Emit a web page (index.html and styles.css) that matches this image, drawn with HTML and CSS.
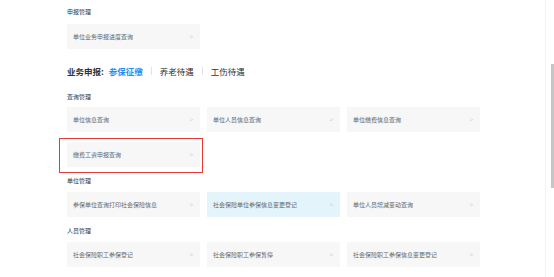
FILE: index.html
```html
<!DOCTYPE html>
<html lang="zh-CN">
  <head>
    <meta charset="UTF-8" />
    <meta name="viewport" content="width=device-width, initial-scale=1.0" />
    <title>业务申报</title>
    <link rel="stylesheet" href="styles.css">
  </head>
  <body>
    <div id="page">
      <div id="main">
        <div class="group group-first">
          <h3 class="group-title">申报管理</h3>
          <ul class="items">
            <li><a href="javascript:;">单位业务申报进度查询</a></li>
          </ul>
        </div>

        <div class="tabs">
          <span class="tabs-label">业务申报:</span>
          <a href="javascript:;" class="active">参保征缴</a>
          <i class="sep"></i>
          <a href="javascript:;">养老待遇</a>
          <i class="sep"></i>
          <a href="javascript:;">工伤待遇</a>
        </div>

        <div class="group group-query">
          <h3 class="group-title">查询管理</h3>
          <ul class="items">
            <li><a href="javascript:;">单位信息查询</a></li>
            <li><a href="javascript:;">单位人员信息查询</a></li>
            <li><a href="javascript:;">单位缴费信息查询</a></li>
            <li class="marked"><a href="javascript:;">缴费工资申报查询</a></li>
          </ul>
        </div>

        <div class="group">
          <h3 class="group-title">单位管理</h3>
          <ul class="items">
            <li><a href="javascript:;">参保单位查询打印社会保险信息</a></li>
            <li class="hover"><a href="javascript:;">社会保险单位参保信息变更登记</a></li>
            <li><a href="javascript:;">单位人员增减变动查询</a></li>
          </ul>
        </div>

        <div class="group">
          <h3 class="group-title">人员管理</h3>
          <ul class="items">
            <li><a href="javascript:;">社会保险职工参保登记</a></li>
            <li><a href="javascript:;">社会保险职工参保暂停</a></li>
            <li><a href="javascript:;">社会保险职工参保信息变更登记</a></li>
          </ul>
        </div>
      </div>
      <div id="scroll">
        <span class="thumb"></span>
      </div>
    </div>
  </body>
</html>
```

FILE: styles.css
```css
html,
body {
  margin: 0;
  padding: 0;
  background: #fff;
}
body {
  font-family: "Noto Sans CJK SC", "Noto Sans", sans-serif;
  color: #333;
}
ul {
  margin: 0;
  padding: 0;
  list-style: none;
}
#page {
  display: flex;
  width: 554px;
  height: 277px;
  overflow: hidden;
}
#main {
  flex: 1;
  padding-left: 67px;
}
#scroll {
  display: flex;
  justify-content: flex-end;
  width: 6px;
  border-left: 1px solid #f3f3f3;
  padding-left: 2px;
}
#scroll .thumb {
  display: block;
  width: 3px;
  height: 124px;
  margin-top: 64px;
  background: #c6c6c6;
}
.group {
  width: 414px;
}
.group-title {
  margin: 8px 0 5px;
  font-size: 6px;
  line-height: 12px;
  font-weight: normal;
  color: #333;
}
.group-first .group-title {
  margin-top: 6px;
  margin-bottom: 6px;
}
.group-query .group-title {
  margin-top: 12px;
  margin-bottom: 4px;
}
.items {
  display: grid;
  grid-template-columns: repeat(3, 133px);
  column-gap: 7px;
  row-gap: 10px;
}
.items li {
  position: relative;
  height: 25px;
  background: #f7f7f7;
}
.items a {
  display: flex;
  align-items: center;
  height: 100%;
  padding-left: 6px;
  font-size: 6px;
  color: #666;
  text-decoration: none;
}
.items a::after {
  content: ">";
  margin-left: auto;
  margin-right: 7px;
  font-size: 6px;
  color: #ccc;
}
.items .hover {
  background: #e4f4fb;
}
.items .marked::before {
  content: "";
  position: absolute;
  left: -8px;
  top: -4px;
  right: -3px;
  bottom: -6px;
  border: 1px solid #e23a3a;
}
.tabs {
  display: flex;
  align-items: center;
  height: 16px;
  margin-top: 14px;
  font-size: 8.5px;
  font-weight: bold;
}
.tabs-label {
  color: #333;
  margin-right: 5px;
}
.tabs a {
  color: #333;
  text-decoration: none;
  font-weight: normal;
}
.tabs a.active {
  color: #1e8ff0;
  font-weight: bold;
}
.tabs .sep {
  display: block;
  width: 1px;
  height: 8px;
  margin: 0 8px;
  background: #e2e2e2;
}
```
